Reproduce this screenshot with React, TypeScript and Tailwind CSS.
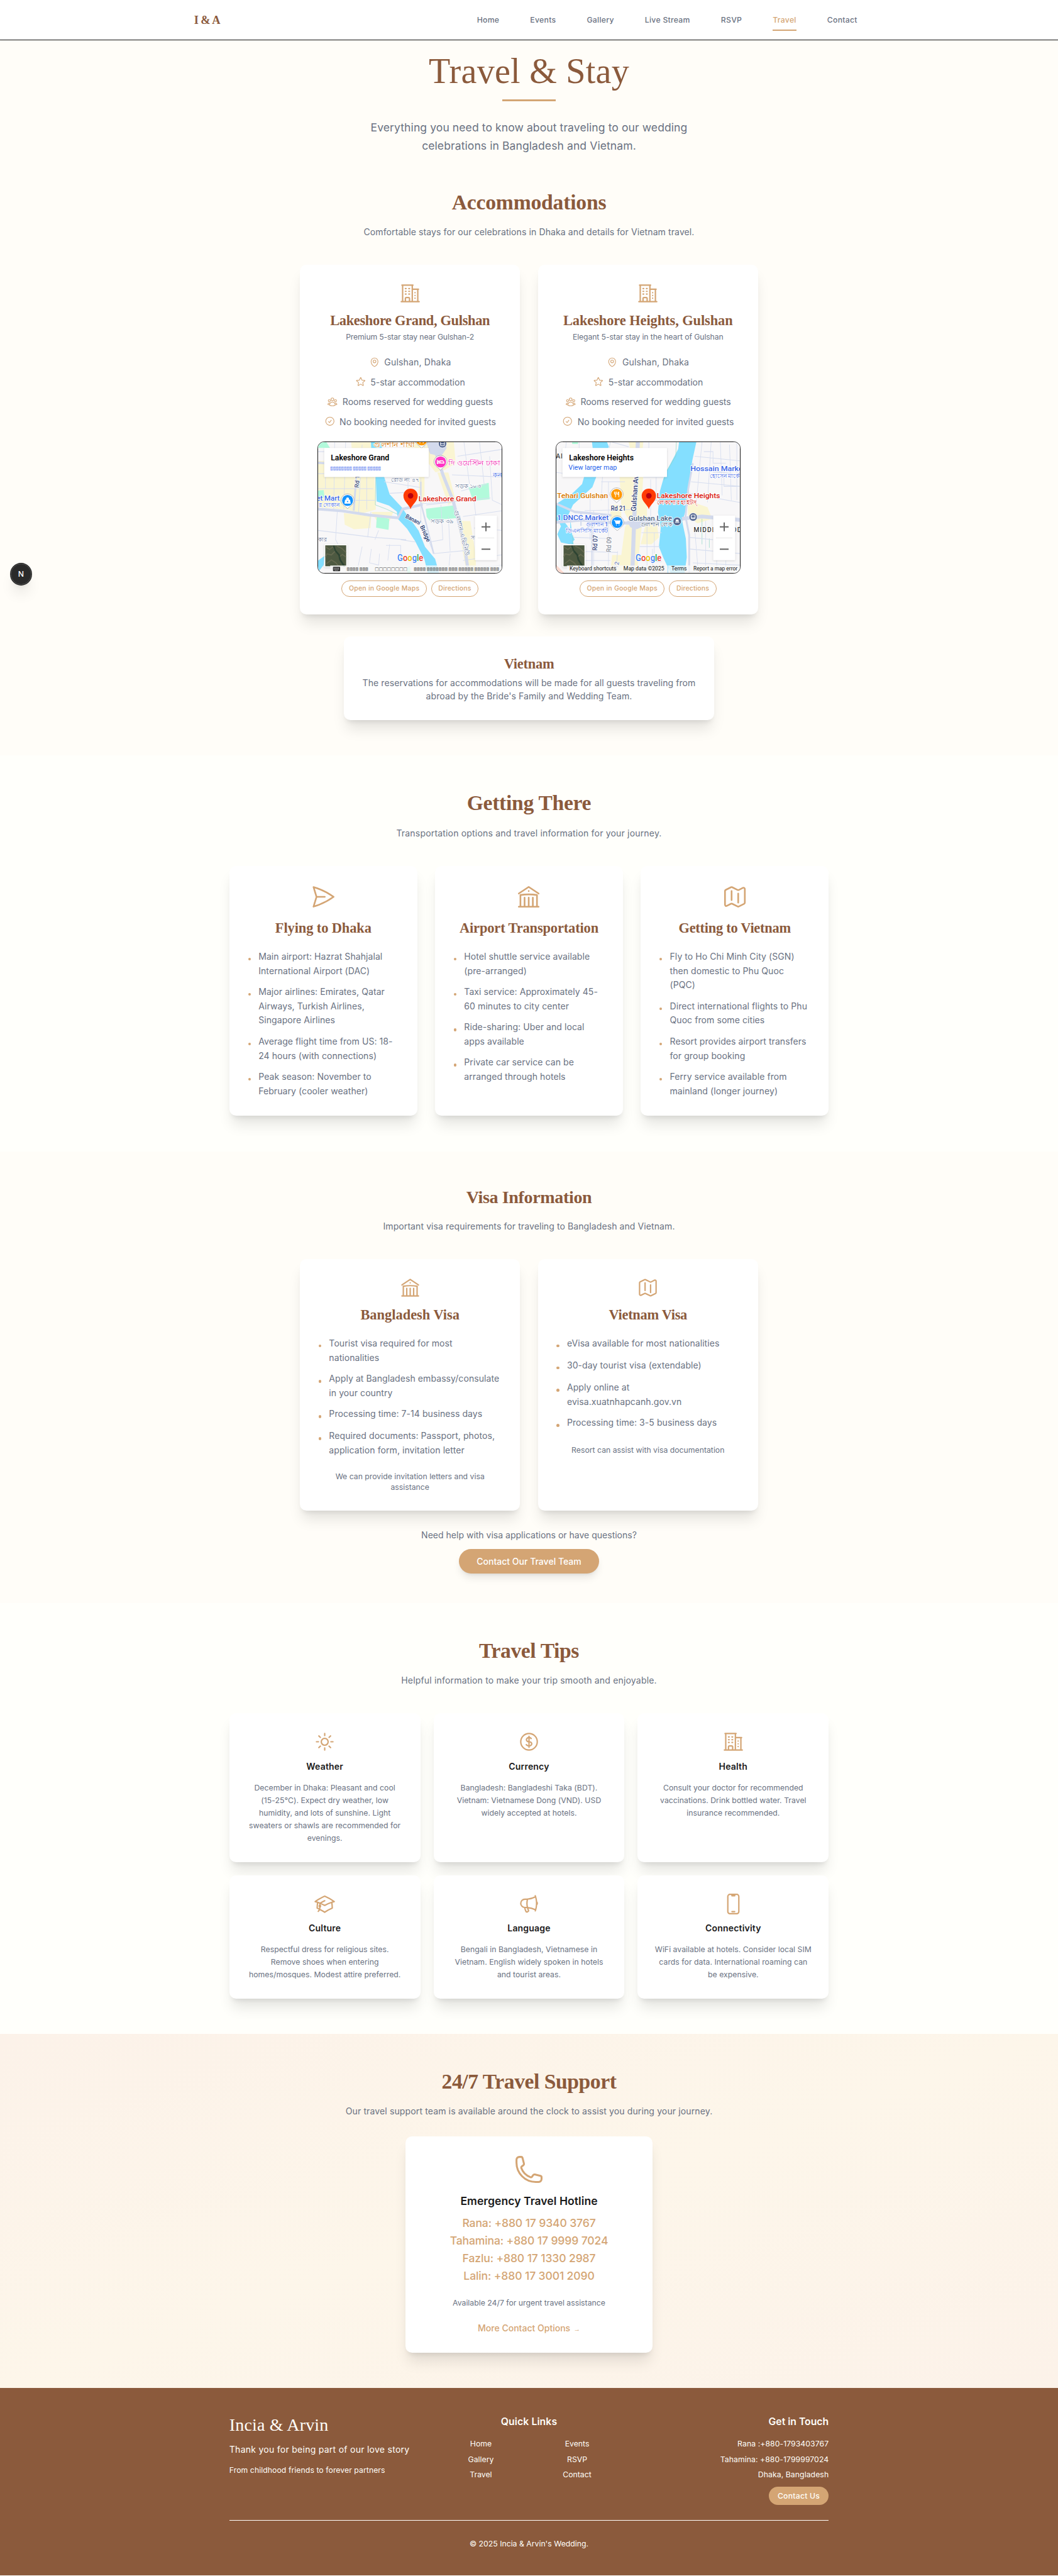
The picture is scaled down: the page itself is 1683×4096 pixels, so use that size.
import React from 'react';
import {
  HiOutlineAcademicCap,
  HiOutlineBuildingLibrary,
  HiOutlineBuildingOffice2,
  HiOutlineCheckCircle,
  HiOutlineCurrencyDollar,
  HiOutlineDevicePhoneMobile,
  HiOutlineMap,
  HiOutlineMapPin,
  HiOutlineMegaphone,
  HiOutlinePaperAirplane,
  HiOutlinePhone,
  HiOutlineStar,
  HiOutlineSun,
  HiOutlineUserGroup,
} from 'react-icons/hi2';

type IconType = React.ComponentType<{ className?: string }>;
type Line = [text: string, tracking?: string];

function Lines({ lines }: { lines: Line[] }) {
  return (
    <>
      {lines.map(([text, tracking]) => (
        <span key={text} className={`block whitespace-nowrap ${tracking ?? ''}`}>
          {text}
        </span>
      ))}
    </>
  );
}

/* ---------- Navigation ---------- */

const navLinks = ['Home', 'Events', 'Gallery', 'Live Stream', 'RSVP', 'Travel', 'Contact'];

function Header() {
  return (
    <header className="relative z-10 h-[73px] border-b border-[#1a1a1a] bg-white shadow-[0_1px_3px_rgba(0,0,0,0.06)]">
      <div className="mx-auto flex h-[72px] max-w-[1280px] items-center justify-between px-8">
        <div className="pt-0.5 font-['Liberation_Serif',serif] text-[21px] font-bold tracking-[-0.6px] text-[#8b5a3c]">
          I &amp; A
        </div>
        <nav className="flex gap-8">
          {navLinks.map((label) => (
            <a
              key={label}
              className={`relative px-3 py-2 text-sm font-medium tracking-[0.3px] ${
                label === 'Travel' ? 'text-[#d4a574]' : 'text-gray-500'
              }`}
            >
              {label}
              {label === 'Travel' && <span className="absolute inset-x-3 top-full h-0.5 bg-[#d4a574]" />}
            </a>
          ))}
        </nav>
      </div>
    </header>
  );
}

/* ---------- Shared pieces ---------- */

function SectionHeading({
  title,
  subtitle,
  size = 'text-[38.4px] leading-10',
  titleTracking = 'tracking-[-0.35px]',
  subTracking = 'tracking-[0.2px]',
  subLeading = 'leading-6',
}: {
  title: string;
  subtitle: string;
  size?: string;
  titleTracking?: string;
  subTracking?: string;
  subLeading?: string;
}) {
  return (
    <div className="flex flex-col items-center gap-[22px] pt-0.5 text-center">
      <h2 className={`font-['Liberation_Serif',serif] font-bold text-[#8b5a3c] ${size} ${titleTracking}`}>{title}</h2>
      <p className={`whitespace-nowrap text-base text-gray-500 ${subLeading} ${subTracking}`}>{subtitle}</p>
    </div>
  );
}

function Card({ className, children }: { className?: string; children: React.ReactNode }) {
  return <div className={`rounded-xl bg-white p-8 shadow-xl ${className ?? ''}`}>{children}</div>;
}

function CardTitle({ tracking, children }: { tracking: string; children: React.ReactNode }) {
  return (
    <h3
      className={`-mb-[1.5px] whitespace-nowrap pt-[1.5px] text-center font-['Liberation_Serif',serif] text-[25.6px] leading-8 font-bold text-[#8b5a3c] ${tracking}`}
    >
      {children}
    </h3>
  );
}

function BulletList({ items }: { items: Line[][] }) {
  return (
    <ul className="mt-6 flex flex-col gap-3 text-base leading-[26px] tracking-[0.08px] text-gray-500">
      {items.map((lines) => (
        <li key={lines[0][0]} className="flex min-h-7 gap-3.5">
          <span className="mt-[15px] ml-0.5 size-[5px] shrink-0 rounded-full bg-[#d4a574]" />
          <div>
            <Lines lines={lines} />
          </div>
        </li>
      ))}
    </ul>
  );
}

/* ---------- Maps ---------- */

function MapLabel({
  x,
  y,
  size,
  fill,
  anchor = 'start',
  rotate = 0,
  weight = 500,
  width,
  spacing,
  children,
}: {
  x: number;
  y: number;
  size: number;
  fill: string;
  anchor?: 'start' | 'middle' | 'end';
  rotate?: number;
  weight?: number;
  width?: number;
  spacing?: number;
  children: React.ReactNode;
}) {
  return (
    <text
      x={x}
      y={y}
      fontSize={size}
      fill={fill}
      stroke="#fff"
      strokeWidth={2}
      strokeLinejoin="round"
      paintOrder="stroke"
      textAnchor={anchor}
      fontWeight={weight}
      textLength={width}
      lengthAdjust="spacingAndGlyphs"
      letterSpacing={spacing}
      transform={rotate ? `rotate(${rotate} ${x} ${y})` : undefined}
    >
      {children}
    </text>
  );
}

function PoiPin({ x, y, color, children }: { x: number; y: number; color: string; children: React.ReactNode }) {
  return (
    <g transform={`translate(${x} ${y})`}>
      <path d="M0 -12a12 12 0 0 1 12 12c0 5-5 9-8 11l-4 4-4-4c-3-2-8-6-8-11a12 12 0 0 1 12-12z" fill="#fff" stroke="#9a9a9a" strokeWidth=".8" />
      <circle r="10" fill={color} />
      {children}
    </g>
  );
}

function RedMarker() {
  return (
    <g transform="translate(168 97.5)">
      <path d="M0 24.5C-1.5 17-13 11-13 0a13 13 0 0 1 26 0c0 11-11.500 17-13 24.500z" fill="#ff3b05" />
      <circle r="5" fill="#b8000f" />
    </g>
  );
}

function GoogleMark() {
  return (
    <text x="144" y="216.500" fontSize="16" fontWeight="500" stroke="#fff" strokeWidth="1.500" paintOrder="stroke" textLength="47" lengthAdjust="spacingAndGlyphs">
      <tspan fill="#4285f4">G</tspan>
      <tspan fill="#ea4335">o</tspan>
      <tspan fill="#e8c400">o</tspan>
      <tspan fill="#4285f4">g</tspan>
      <tspan fill="#34a853">l</tspan>
      <tspan fill="#ea4335">e</tspan>
    </text>
  );
}

function MapControls({ title, link }: { title: string; link: React.ReactNode }) {
  return (
    <>
      <g className="drop-shadow-sm">
        <rect x="11" y="10.500" width="190" height="53" rx="1.500" fill="#fff" />
        <rect x="285" y="133.500" width="40" height="81" rx="1" fill="#fff" />
        <rect x="11" y="185.500" width="42" height="42" rx="2" fill="#fff" />
      </g>
      <text x="23" y="33.500" fontSize="14" fontWeight="600" fill="#000">
        {title}
      </text>
      {link}
      <path d="M297 154h16M305 146v16M297 194.500h16" stroke="#666" strokeWidth="2.200" />
      <path d="M290 174h30" stroke="#e6e6e6" />
      <rect x="13" y="187.500" width="38" height="38" fill="#4d5941" />
      <path d="M13 190l8 5 6-5 4 8-7 7-8-2-3 6M34 189l9 4 8 8M38 209l6-5 7 5M15 221l9-7 8 5 5 6" stroke="#76745a" strokeWidth="2" fill="none" opacity=".6" />
      <path d="M28 188l3 9 7 8 2 9 8 12" stroke="#1f3a2c" strokeWidth="3" fill="none" opacity=".7" />
    </>
  );
}

const MAP_FONT = "Roboto, 'Noto Sans', sans-serif";

function GrandMap() {
  return (
    <svg viewBox="0 0 334 238" className="block size-full" fontFamily={MAP_FONT}>
      <rect width="334" height="238" fill="#f8f7f8" />
      <g transform="scale(.3333 .4209) translate(-110 -789)">
        <path d="M110 870h190l-10-80h120l15 290-90 20-60-20-165-10z M590 789h260l10 90-60 30-50 10-40-40H600z M760 920h60l40 120-40 20z M250 1095l150 15-5 50-90 5-50-20z M400 1090h120l-20 40h-70z M870 1130h70l30 150v76h-50z M660 930h30v120h-30z" fill="#faf5d2" />
        <path d="M110 789h45l20 25h-65z M110 998l30-2 5 32-35 5z M430 1108l68 12-4 48-68-10z M697 1077l155-15 15 55-150 10-15-15z M930 985l110-20 5 70-90 8z M595 1330l15-6 6 32h-20z" fill="#b2fadb" />
        <path d="M398 789h62l-10 80 20 70 30 75 68 58 20 24 70 75 35 70 55 52 22 63h-62l-18-60-50-78-45-55-50-42-6-32-42-26-68-18-5-120-22-60z M110 1300l35-20-5 40-30 30z" fill="#84dfff" />
        <path d="M425 860l-3 200 60 18 60 22" fill="none" stroke="#8bd5c0" strokeWidth="2" />
        <g fill="none" stroke="#d7deef" strokeWidth="3">
          <path d="M200 789l-5 290M260 789l-10 290M350 800l-20 300M110 925h310M110 990h300M110 1040h310M150 870v120M375 930v150M110 830h300" />
          <path d="M215 1080l-10 130 60 90-5 56M110 1170l300 30 180 10M380 1200l18-110M440 1170l-20 40M480 1235h80v60M400 1250l-10 60 50 10 5-50M500 1230l-10 70M350 1240l-30 116M560 1210l80 10" />
          <path d="M470 960l200 25v140l70 145 200-15M500 1010l120-5M670 945v110l200-10M600 930v60M780 1060l10 150-70 10M820 1110l10 150M700 1060l170-15 180-15M870 850l245-30M905 789l30 180M990 789l25 180M840 930l275 10M1045 850l15 190 55 20M890 1000l140-30M900 1110l215-25M960 1160l155 10M960 1040l20 130M1000 1330l115-10M830 1270l-10 86M900 1300l215-25" />
          <path d="M620 789l20 60 60 20M690 789v40" />
        </g>
        <g fill="none" stroke="#d3daed">
          <path d="M735 789l55 140 55 110 35 105 30 100 20 112" strokeWidth="17" />
          <path d="M110 1078l130 8 150 18 155 12 25-38 110-20" strokeWidth="12" />
          <path d="M318 940l-14 145M110 878l35 2" strokeWidth="10" />
          <path d="M670 960v90l70 220" strokeWidth="8" />
        </g>
        <path d="M700 789l20 50 60 12 30-35-5-27z" fill="#d3daed" />
      </g>
      <MapLabel x={101} y={9} size={12} fill="#d97800" width={74}>গুলশান শাখা</MapLabel>
      <PoiPin x={188} y={-4} color="#ff9800">
        <path d="M-3 -2v8M3 -2v8" stroke="#fff" strokeWidth="1.500" />
      </PoiPin>
      <g transform="translate(226 3)">
        <circle r="7.500" fill="#52658f" stroke="#fff" strokeWidth="1" />
        <rect x="-3.500" y="-4" width="7" height="7.500" rx="1" fill="none" stroke="#fff" strokeWidth="1.200" />
        <path d="M-3.500 0h7" stroke="#fff" />
      </g>
      <PoiPin x={222.5} y={36} color="#ff35c4">
        <path d="M-6 -4v8M-6 2h12M6 3v-3l-2-2h-5v4" stroke="#fff" strokeWidth="1.500" fill="none" />
        <circle cx="-3.500" cy="-1" r="1.500" fill="#fff" />
      </PoiPin>
      <MapLabel x={237} y={42} size={13} fill="#f01fb3" width={94}>দি ওয়েস্টিন ঢাকা</MapLabel>
      <MapLabel x={317} y={64} size={12} fill="#3a66e6">কনক</MapLabel>
      <MapLabel x={132} y={72} size={10} fill="#5c7093" width={52}>রোড নং ৪৭</MapLabel>
      <MapLabel x={249} y={83} size={11} fill="#5c7093" width={48}>সড়ক ১০৩</MapLabel>
      <MapLabel x={205} y={147} size={11} fill="#5c7093" width={41}>সড়ক ৩৯</MapLabel>
      <MapLabel x={74} y={83} size={11} fill="#3b4b75" rotate={-86}>Rd 11</MapLabel>
      <MapLabel x={39} y={106} size={13} fill="#3a66e6" anchor="end">et Mart</MapLabel>
      <MapLabel x={39} y={118} size={10} fill="#3a66e6" anchor="end">র দোকান</MapLabel>
      <PoiPin x={53.5} y={106} color="#1394ff">
        <path d="M-4 -1h8l1 6H-5zM-2 -1v-2a2 2 0 0 1 4 0v2" stroke="#fff" strokeWidth="1.200" fill="#fff" />
        <circle cy="2" r="1.200" fill="#1394ff" />
      </PoiPin>
      <MapLabel x={158} y={137} size={11} fill="#1f3a73" rotate={28} width={29}>Banani</MapLabel>
      <MapLabel x={185} y={153} size={11} fill="#1f3a73" rotate={66}>Bridge</MapLabel>
      <MapLabel x={247} y={124} size={11} fill="#5c7093" rotate={76} width={86}>গুলশান এভিনিউ</MapLabel>
      <MapLabel x={0} y={180} size={10} fill="#5c7093">কার</MapLabel>
      <MapLabel x={277} y={177} size={10} fill="#5c7093">সড়ক</MapLabel>
      <RedMarker />
      <MapLabel x={182.5} y={107} size={13.5} fill="#d9150b" width={105}>Lakeshore Grand</MapLabel>
      <GoogleMark />
      <MapControls
        title="Lakeshore Grand"
        link={
          <text x="22" y="50" fontSize="9" fill="#5b7df0" textLength="92" lengthAdjust="spacingAndGlyphs" fontFamily="'DejaVu Sans', sans-serif">
            ▨▨▨▨▨▨▨▨ ▨▨▨▨▨ ▨▨▨▨▨
          </text>
        }
      />
      <rect x="22" y="224" width="312" height="14" fill="#f8f8f8" opacity=".75" />
      <rect x="27" y="226.500" width="13" height="8" rx="1" fill="#333" />
      <path d="M28.500 229h10M28.500 231h10M30.500 233h6" stroke="#fff" strokeWidth=".8" strokeDasharray="1.200 .8" />
      <g fontFamily="'DejaVu Sans', sans-serif" fill="#444" fontSize="8">
        <text x="52" y="233.500" textLength="39" lengthAdjust="spacingAndGlyphs">▨▨▨▨ ▨▨▨</text>
        <text x="103" y="233.500" textLength="59" lengthAdjust="spacingAndGlyphs">□□□□□□□□</text>
        <text x="174" y="233.500" textLength="155" lengthAdjust="spacingAndGlyphs">▨▨▨▨ ▨▨▨▨▨▨▨ ▨▨▨ ▨▨▨▨▨ ▨▨▨▨▨ ▨▨▨</text>
      </g>
    </svg>
  );
}

function HeightsMap() {
  return (
    <svg viewBox="0 0 334 238" className="block size-full" fontFamily={MAP_FONT}>
      <rect width="334" height="238" fill="#f8f7f8" />
      <g transform="scale(.3333 .4209) translate(-146 -789)">
        <path d="M540 789h80l-5 40h-65z M490 930h130l-5 70 25 40v70l-25 20-10 70-20 156H440l10-80h50l20-120 20-30-40-60z M860 1040l110 30 25 50-80 20-50-30z M640 1120h50l15 80-40 30h-60z M440 1060h60v70h-60z" fill="#faf5d2" />
        <path d="M232 789h32v8h-32z" fill="#b2fadb" />
        <path d="M146 1320l45 36h-45z" fill="#fbd9cf" />
        <path d="M340 789h82l10 20-40 70-50 105-105 75-35 60-56 15v-78l90-48 50-38 32-90 28-50z M146 1090l60 60 40 60-25 20-50-8-20-35 20-35-25-40z M222 1120l15 100 20 70h-12l-25-80z M815 789h94l-22 80-15 90-10 100-30 72 20 75 5 80-12 70h-75l-40-66-25-50 10-82-15-66 10-90 25-70 50-75 25-38z" fill="#84dfff" />
        <path d="M800 789l-3 60-50 65-15 40M940 1120v110M235 1190v60M980 1205v40" fill="none" stroke="#8bd5c0" strokeWidth="2" />
        <g fill="none" stroke="#d7deef" strokeWidth="3">
          <path d="M146 850l180 10M146 920l160 15M200 789l-20 140M270 789v80M440 789l-20 90M430 870h110M450 789l90 20M390 960h130M400 900l-10 140M430 960v240M300 1085l250-5M330 1010v200M240 1200l180 5M350 1085v270M430 1200v156M250 1260l230 5M480 1260l-10 90M210 1300h230M300 1260v96" />
          <path d="M610 870h110M620 940h110M650 789v150M690 840v200M620 1040h90M660 950v160M620 850l130-20M610 1180h110M640 1130v226M600 1240h110M680 1180v90M600 1300l120 5M670 1250v106" />
          <path d="M900 850l250 20M895 900l250 30M880 960l270 20M940 789l-30 250M990 789l-20 260M1040 789l10 230M1090 800l10 240M1130 789v250M870 1010l280 40M1000 920h60v60h80M950 830h50v50h70M900 1160l20 196M960 1130v226M870 1200l130 10M870 1250l280 20M890 1310l260 10M1020 1300v56M1070 1300v56" />
        </g>
        <g fill="none" stroke="#d3daed">
          <path d="M590 789l-5 100-15 240-10 227" strokeWidth="22" />
          <path d="M146 1135l140-10 120 10 180 5 60-10h60" strokeWidth="13" />
          <path d="M830 1120l110-10 210 15" strokeWidth="16" />
          <path d="M146 1055l100 35 200 15M890 880l-25 110-15 120 20 80v166" strokeWidth="10" />
          <path d="M280 1090v60M340 1110v246" strokeWidth="7" />
        </g>
        <path d="M530 1130h80l15 20-40 15-35-8z" fill="#d3daed" />
      </g>
      <MapLabel x={-1} y={30} size={12} fill="#444" spacing={1}>AI</MapLabel>
      <MapLabel x={243.5} y={53} size={13.5} fill="#3a66e6" width={100}>Hossain Market</MapLabel>
      <MapLabel x={279} y={65} size={10} fill="#3a66e6">হোসেন মার্কেট</MapLabel>
      <MapLabel x={94} y={102} size={13.5} fill="#d97800" anchor="end" width={93}>Tehari Gulshan</MapLabel>
      <PoiPin x={109.5} y={95} color="#ff9800">
        <path d="M-4 -5v3q0 2 2 2v5M0 -5v3q0 2-2 2M-2 -5v4M4 -5v10M4 -5q-2 2-2 5h2" stroke="#fff" strokeWidth="1.200" fill="none" />
      </PoiPin>
      <MapLabel x={99} y={124} size={11.5} fill="#33437a" width={27}>Rd 21</MapLabel>
      <MapLabel x={144.5} y={126} size={13} fill="#33437a" rotate={-86}>Gulshan Ave</MapLabel>
      <MapLabel x={95} y={142} size={13.5} fill="#3a66e6" anchor="end" width={94}>1 DNCC Market</MapLabel>
      <MapLabel x={94} y={153} size={10} fill="#3a66e6" anchor="end">গুলশান 1</MapLabel>
      <MapLabel x={94} y={164} size={10.5} fill="#3a66e6" anchor="end" width={77}>ডিএনসিসি মার্কেট</MapLabel>
      <PoiPin x={110.5} y={146} color="#1394ff">
        <path d="M-6 -4h2l2 6h6l1.500-5h-8" stroke="#fff" strokeWidth="1.300" fill="#fff" />
        <path d="M-2 4.500h1M3 4.500h1" stroke="#fff" strokeWidth="2" />
      </PoiPin>
      <MapLabel x={210} y={143} size={13} fill="#4a6080" anchor="end" width={79}>Gulshan Lake</MapLabel>
      <MapLabel x={210} y={153} size={10} fill="#4a6080" anchor="end" width={57}>গুলশান লেক</MapLabel>
      <g stroke="#fff" transform="translate(219.500 144)">
        <circle r="7.500" fill="#52658f" />
        <path d="M-4 2h8M-2.500 0h5l-1-3h-3z" strokeWidth="1.200" fill="#fff" />
      </g>
      <g stroke="#fff" transform="translate(248.500 136)">
        <circle r="7.500" fill="#52658f" />
        <rect x="-3.500" y="-3.500" width="7" height="6.500" rx="1" fill="none" strokeWidth="1.300" />
        <path d="M-3.500 1h7" />
      </g>
      <MapLabel x={249.5} y={163} size={11.5} fill="#333" spacing={1.3}>MIDDLE BADDA</MapLabel>
      <MapLabel x={74} y={197} size={12} fill="#33437a" rotate={-88} width={28}>Rd 07</MapLabel>
      <MapLabel x={99} y={200} size={12} fill="#8a8f9c" rotate={-88} width={28}>Rd 09</MapLabel>
      <MapLabel x={112} y={230} size={11} fill="#7c8cb8" rotate={-80}>12</MapLabel>
      <RedMarker />
      <MapLabel x={182.5} y={102} size={13.5} fill="#d9150b" width={115}>Lakeshore Heights</MapLabel>
      <MapLabel x={183} y={113} size={10.5} fill="#d9150b" width={72}>লেকশোর হাইটস্</MapLabel>
      <GoogleMark />
      <MapControls
        title="Lakeshore Heights"
        link={
          <text x="22" y="50.500" fontSize="12" fill="#2563eb" textLength="88" lengthAdjust="spacingAndGlyphs">
            View larger map
          </text>
        }
      />
      <rect x="19" y="224" width="315" height="14" fill="#f8f8f8" opacity=".75" />
      <path d="M202.500 224v14" stroke="#8fd9ff" />
      <g fill="#111" fontSize="10">
        <text x="24" y="233.500" textLength="85" lengthAdjust="spacingAndGlyphs">Keyboard shortcuts</text>
        <text x="122" y="233.500" textLength="74" lengthAdjust="spacingAndGlyphs">Map data ©2025</text>
        <text x="209" y="233.500" textLength="28" lengthAdjust="spacingAndGlyphs">Terms</text>
        <text x="249" y="233.500" textLength="80" lengthAdjust="spacingAndGlyphs">Report a map error</text>
      </g>
    </svg>
  );
}

/* ---------- Sections ---------- */

const amenities: [IconType, string, string][] = [
  [HiOutlineMapPin, 'Gulshan, Dhaka', 'tracking-[0.2px]'],
  [HiOutlineStar, '5-star accommodation', ''],
  [HiOutlineUserGroup, 'Rooms reserved for wedding guests', ''],
  [HiOutlineCheckCircle, 'No booking needed for invited guests', ''],
];

function HotelCard({
  name,
  nameTracking,
  tagline,
  taglineTracking,
  map,
}: {
  name: string;
  nameTracking: string;
  tagline: string;
  taglineTracking: string;
  map: React.ReactNode;
}) {
  return (
    <Card className="flex flex-col items-center">
      <HiOutlineBuildingOffice2 className="size-10 text-[#d4a574]" />
      <div className="mt-3 h-8">
        <CardTitle tracking={nameTracking}>{name}</CardTitle>
      </div>
      <p className={`mt-1 text-sm text-gray-500 ${taglineTracking}`}>{tagline}</p>
      <ul className="mt-6 flex flex-col items-center gap-3 text-base text-gray-500">
        {amenities.map(([Icon, label, tracking]) => (
          <li key={label} className={`flex items-center gap-2 whitespace-nowrap ${tracking}`}>
            <Icon className="size-5 text-[#d4a574]" />
            {label}
          </li>
        ))}
      </ul>
      <div className="mt-6 h-60 w-full overflow-hidden rounded-xl border border-[#1a1a1a]">{map}</div>
      <div className="mt-3 flex gap-2 text-xs font-medium text-[#d4a574]">
        <a className="rounded-full border border-[#d4a574] px-3 py-1.5 tracking-[0.27px] whitespace-nowrap">Open in Google Maps</a>
        <a className="rounded-full border border-[#d4a574] px-3 py-1.5 tracking-[0.15px]">Directions</a>
      </div>
    </Card>
  );
}

const transport: { icon: IconType; title: string; tracking: string; items: Line[][] }[] = [
  {
    icon: HiOutlinePaperAirplane,
    title: 'Flying to Dhaka',
    tracking: 'tracking-[-0.12px]',
    items: [
      [['Main airport: Hazrat Shahjalal'], ['International Airport (DAC)']],
      [['Major airlines: Emirates, Qatar'], ['Airways, Turkish Airlines,'], ['Singapore Airlines']],
      [['Average flight time from US: 18-'], ['24 hours (with connections)']],
      [['Peak season: November to'], ['February (cooler weather)']],
    ],
  },
  {
    icon: HiOutlineBuildingLibrary,
    title: 'Airport Transportation',
    tracking: 'tracking-[-0.15px]',
    items: [
      [['Hotel shuttle service available'], ['(pre-arranged)']],
      [['Taxi service: Approximately 45-'], ['60 minutes to city center']],
      [['Ride-sharing: Uber and local'], ['apps available']],
      [['Private car service can be'], ['arranged through hotels']],
    ],
  },
  {
    icon: HiOutlineMap,
    title: 'Getting to Vietnam',
    tracking: 'tracking-[-0.3px]',
    items: [
      [['Fly to Ho Chi Minh City (SGN)'], ['then domestic to Phu Quoc'], ['(PQC)']],
      [['Direct international flights to Phu'], ['Quoc from some cities']],
      [['Resort provides airport transfers'], ['for group booking']],
      [['Ferry service available from'], ['mainland (longer journey)']],
    ],
  },
];

const visas: { icon: IconType; title: string; tracking: string; items: Line[][]; note: Line[] }[] = [
  {
    icon: HiOutlineBuildingLibrary,
    title: 'Bangladesh Visa',
    tracking: 'tracking-normal',
    items: [
      [['Tourist visa required for most'], ['nationalities']],
      [['Apply at Bangladesh embassy/consulate'], ['in your country']],
      [['Processing time: 7-14 business days']],
      [['Required documents: Passport, photos,'], ['application form, invitation letter']],
    ],
    note: [['We can provide invitation letters and visa'], ['assistance']],
  },
  {
    icon: HiOutlineMap,
    title: 'Vietnam Visa',
    tracking: 'tracking-[-0.35px]',
    items: [
      [['eVisa available for most nationalities']],
      [['30-day tourist visa (extendable)']],
      [['Apply online at'], ['evisa.xuatnhapcanh.gov.vn']],
      [['Processing time: 3-5 business days']],
    ],
    note: [['Resort can assist with visa documentation']],
  },
];

const tips: { icon: IconType; title: string; text: Line[] }[] = [
  {
    icon: HiOutlineSun,
    title: 'Weather',
    text: [
      ['December in Dhaka: Pleasant and cool'],
      ['(15-25°C). Expect dry weather, low'],
      ['humidity, and lots of sunshine. Light'],
      ['sweaters or shawls are recommended for'],
      ['evenings.'],
    ],
  },
  {
    icon: HiOutlineCurrencyDollar,
    title: 'Currency',
    text: [
      ['Bangladesh: Bangladeshi Taka (BDT).'],
      ['Vietnam: Vietnamese Dong (VND). USD'],
      ['widely accepted at hotels.'],
    ],
  },
  {
    icon: HiOutlineBuildingOffice2,
    title: 'Health',
    text: [
      ['Consult your doctor for recommended'],
      ['vaccinations. Drink bottled water. Travel'],
      ['insurance recommended.'],
    ],
  },
  {
    icon: HiOutlineAcademicCap,
    title: 'Culture',
    text: [
      ['Respectful dress for religious sites.'],
      ['Remove shoes when entering'],
      ['homes/mosques. Modest attire preferred.'],
    ],
  },
  {
    icon: HiOutlineMegaphone,
    title: 'Language',
    text: [
      ['Bengali in Bangladesh, Vietnamese in'],
      ['Vietnam. English widely spoken in hotels'],
      ['and tourist areas.'],
    ],
  },
  {
    icon: HiOutlineDevicePhoneMobile,
    title: 'Connectivity',
    text: [
      ['WiFi available at hotels. Consider local SIM'],
      ['cards for data. International roaming can'],
      ['be expensive.'],
    ],
  },
];

const hotlines = [
  'Rana: +880 17 9340 3767',
  'Tahamina: +880 17 9999 7024',
  'Fazlu: +880 17 1330 2987',
  'Lalin: +880 17 3001 2090',
];

function Footer() {
  return (
    <footer className="bg-[#8b5a3c] py-12 text-[#fffef9]">
      <div className="mx-auto w-[1088px]">
        <div className="grid grid-cols-3 gap-8">
          <div>
            <div className="pt-0.5 font-['Liberation_Serif',serif] text-[32px] leading-9 tracking-[0.17px]">Incia &amp; Arvin</div>
            <p className="mt-3.5 text-base leading-[26px] tracking-[0.3px]">Thank you for being part of our love story</p>
            <p className="mt-3 text-sm leading-[22.75px] tracking-[0.06px]">From childhood friends to forever partners</p>
          </div>
          <div className="text-center">
            <h4 className="text-lg leading-7 font-semibold tracking-[0.1px]">Quick Links</h4>
            <div className="mt-4 grid grid-cols-2 gap-2 text-sm">
              {['Home', 'Events', 'Gallery', 'RSVP', 'Travel', 'Contact'].map((l) => (
                <a key={l}>{l}</a>
              ))}
            </div>
          </div>
          <div className="flex flex-col items-end">
            <h4 className="text-lg leading-7 font-semibold">Get in Touch</h4>
            <div className="mt-4 flex flex-col items-end gap-2 text-sm tracking-[0.07px]">
              <p>Rana :+880-1793403767</p>
              <p>Tahamina: +880-1799997024</p>
              <p>Dhaka, Bangladesh</p>
            </div>
            <a className="mt-3 flex h-[33px] items-center rounded-full bg-[#d4a574] px-4 text-sm font-medium tracking-[0.25px]">
              Contact Us
            </a>
          </div>
        </div>
        <div className="mt-[27px] border-t border-[#fffef9] pt-8 text-center text-sm">© 2025 Incia &amp; Arvin's Wedding.</div>
      </div>
    </footer>
  );
}

export default function App() {
  return (
    <div className="relative bg-[#fffdf8] font-['Inter',sans-serif] [zoom:0.87634]">
      <Header />
      <main>
        <section className="flex flex-col items-center pt-[26.5px]">
          <h1 className="font-['Liberation_Serif',serif] text-[64px] leading-[60px] tracking-[0.28px] text-[#8b5a3c]">
            Travel &amp; Stay
          </h1>
          <div className="mt-[20.5px] h-1 w-24 bg-[#d4a574]" />
          <p className="mt-8 text-center text-xl leading-[32.5px] tracking-[0.11px] text-gray-500">
            <Lines
              lines={[['Everything you need to know about traveling to our wedding'], ['celebrations in Bangladesh and Vietnam.']]}
            />
          </p>
        </section>

        <section className="flex flex-col items-center py-16">
          <SectionHeading
            title="Accommodations"
            titleTracking="tracking-[-0.24px]"
            subtitle="Comfortable stays for our celebrations in Dhaka and details for Vietnam travel."
            subTracking="tracking-[0.12px]"
          />
          <div className="mt-12 grid w-[832px] grid-cols-2 gap-8">
            <HotelCard
              name="Lakeshore Grand, Gulshan"
              nameTracking="tracking-[-0.37px]"
              tagline="Premium 5-star stay near Gulshan-2"
              taglineTracking="tracking-[-0.2px]"
              map={<GrandMap />}
            />
            <HotelCard
              name="Lakeshore Heights, Gulshan"
              nameTracking="tracking-[-0.09px]"
              tagline="Elegant 5-star stay in the heart of Gulshan"
              taglineTracking="tracking-[-0.12px]"
              map={<HeightsMap />}
            />
          </div>
          <Card className="mt-10 w-[672px]">
            <CardTitle tracking="tracking-[-0.27px]">Vietnam</CardTitle>
            <p className="mt-2 flex flex-col items-center text-base tracking-[0.09px] text-gray-500">
              <Lines
                lines={[
                  ['The reservations for accommodations will be made for all guests traveling from'],
                  ["abroad by the Bride's Family and Wedding Team."],
                ]}
              />
            </p>
          </Card>
        </section>

        <section className="flex flex-col items-center bg-[#fffffb] py-16">
          <SectionHeading title="Getting There" subtitle="Transportation options and travel information for your journey." />
          <div className="mt-12 grid w-[1088px] grid-cols-3 gap-8">
            {transport.map(({ icon: Icon, title, tracking, items }) => (
              <Card key={title}>
                <Icon className="mx-auto mb-4 size-12 text-[#d4a574]" />
                <CardTitle tracking={tracking}>{title}</CardTitle>
                <BulletList items={items} />
              </Card>
            ))}
          </div>
        </section>

        <section className="flex flex-col items-center pt-16 pb-[54px]">
          <SectionHeading
            title="Visa Information"
            size="text-[32px] leading-9"
            titleTracking="tracking-[-0.4px]"
            subTracking="tracking-[0.1px]"
            subtitle="Important visa requirements for traveling to Bangladesh and Vietnam."
          />
          <div className="mt-12 grid w-[832px] grid-cols-2 gap-8">
            {visas.map(({ icon: Icon, title, tracking, items, note }) => (
              <Card key={title}>
                <Icon className="mx-auto mb-3 size-10 text-[#d4a574]" />
                <CardTitle tracking={tracking}>{title}</CardTitle>
                <BulletList items={items} />
                <p className="mt-6 flex flex-col items-center text-sm text-gray-500">
                  <Lines lines={note} />
                </p>
              </Card>
            ))}
          </div>
          <p className="mt-8 text-base text-gray-500">Need help with visa applications or have questions?</p>
          <a className="mt-3.5 rounded-full bg-[#d4a574] px-8 py-2.5 text-base font-medium text-white shadow-lg">
            Contact Our Travel Team
          </a>
        </section>

        <section className="flex flex-col items-center bg-[#fffffb] py-16">
          <SectionHeading
            title="Travel Tips"
            titleTracking="tracking-[-0.5px]"
            subtitle="Helpful information to make your trip smooth and enjoyable."
          />
          <div className="mt-12 grid w-[1088px] grid-cols-3 gap-6">
            {tips.map(({ icon: Icon, title, text }) => (
              <Card key={title} className="text-center">
                <Icon className="mx-auto mb-3 size-10 text-[#d4a574]" />
                <h3 className="text-base font-semibold tracking-[0.2px] text-[#1a1a1a]">{title}</h3>
                <p className="mt-4 flex flex-col items-center text-sm leading-[22.75px] tracking-[0.03px] text-gray-500">
                  <Lines lines={text} />
                </p>
              </Card>
            ))}
          </div>
        </section>

        <section className="flex flex-col items-center bg-linear-to-br from-[#fcf2e9] via-[#fdf6ea] to-[#fcf2e9] py-16">
          <SectionHeading
            title="24/7 Travel Support"
            titleTracking="tracking-[-0.52px]"
            subtitle="Our travel support team is available around the clock to assist you during your journey."
            subTracking="tracking-[0.14px]"
            subLeading="leading-[26px]"
          />
          <Card className="mt-8 flex h-[392px] w-[448px] flex-col items-center">
            <HiOutlinePhone className="size-14 text-[#d4a574]" />
            <h3 className="mt-4 text-xl leading-7 font-semibold tracking-[0.08px] text-[#1a1a1a]">Emergency Travel Hotline</h3>
            <div className="mt-[9.5px] flex flex-col items-center text-xl leading-8 font-medium tracking-[-0.12px] text-[#d4a574]">
              {hotlines.map((line) => (
                <a key={line}>{line}</a>
              ))}
            </div>
            <p className="mt-[22.5px] text-sm text-gray-500">Available 24/7 for urgent travel assistance</p>
            <a className="mt-6 flex items-center gap-1.5 text-base font-medium text-[#d4a574]">
              More Contact Options
              <span className="pt-1 font-['Liberation_Sans',sans-serif] text-[12px] leading-5">→</span>
            </a>
          </Card>
        </section>
      </main>
      <Footer />

      <div className="absolute top-[1023px] left-[19px] flex size-[38px] items-center justify-center rounded-full border border-[#555] bg-[#2a2a2a] text-sm font-medium text-white shadow-xl ring-1 ring-[#1a1a1a]">
        N
      </div>
    </div>
  );
}
